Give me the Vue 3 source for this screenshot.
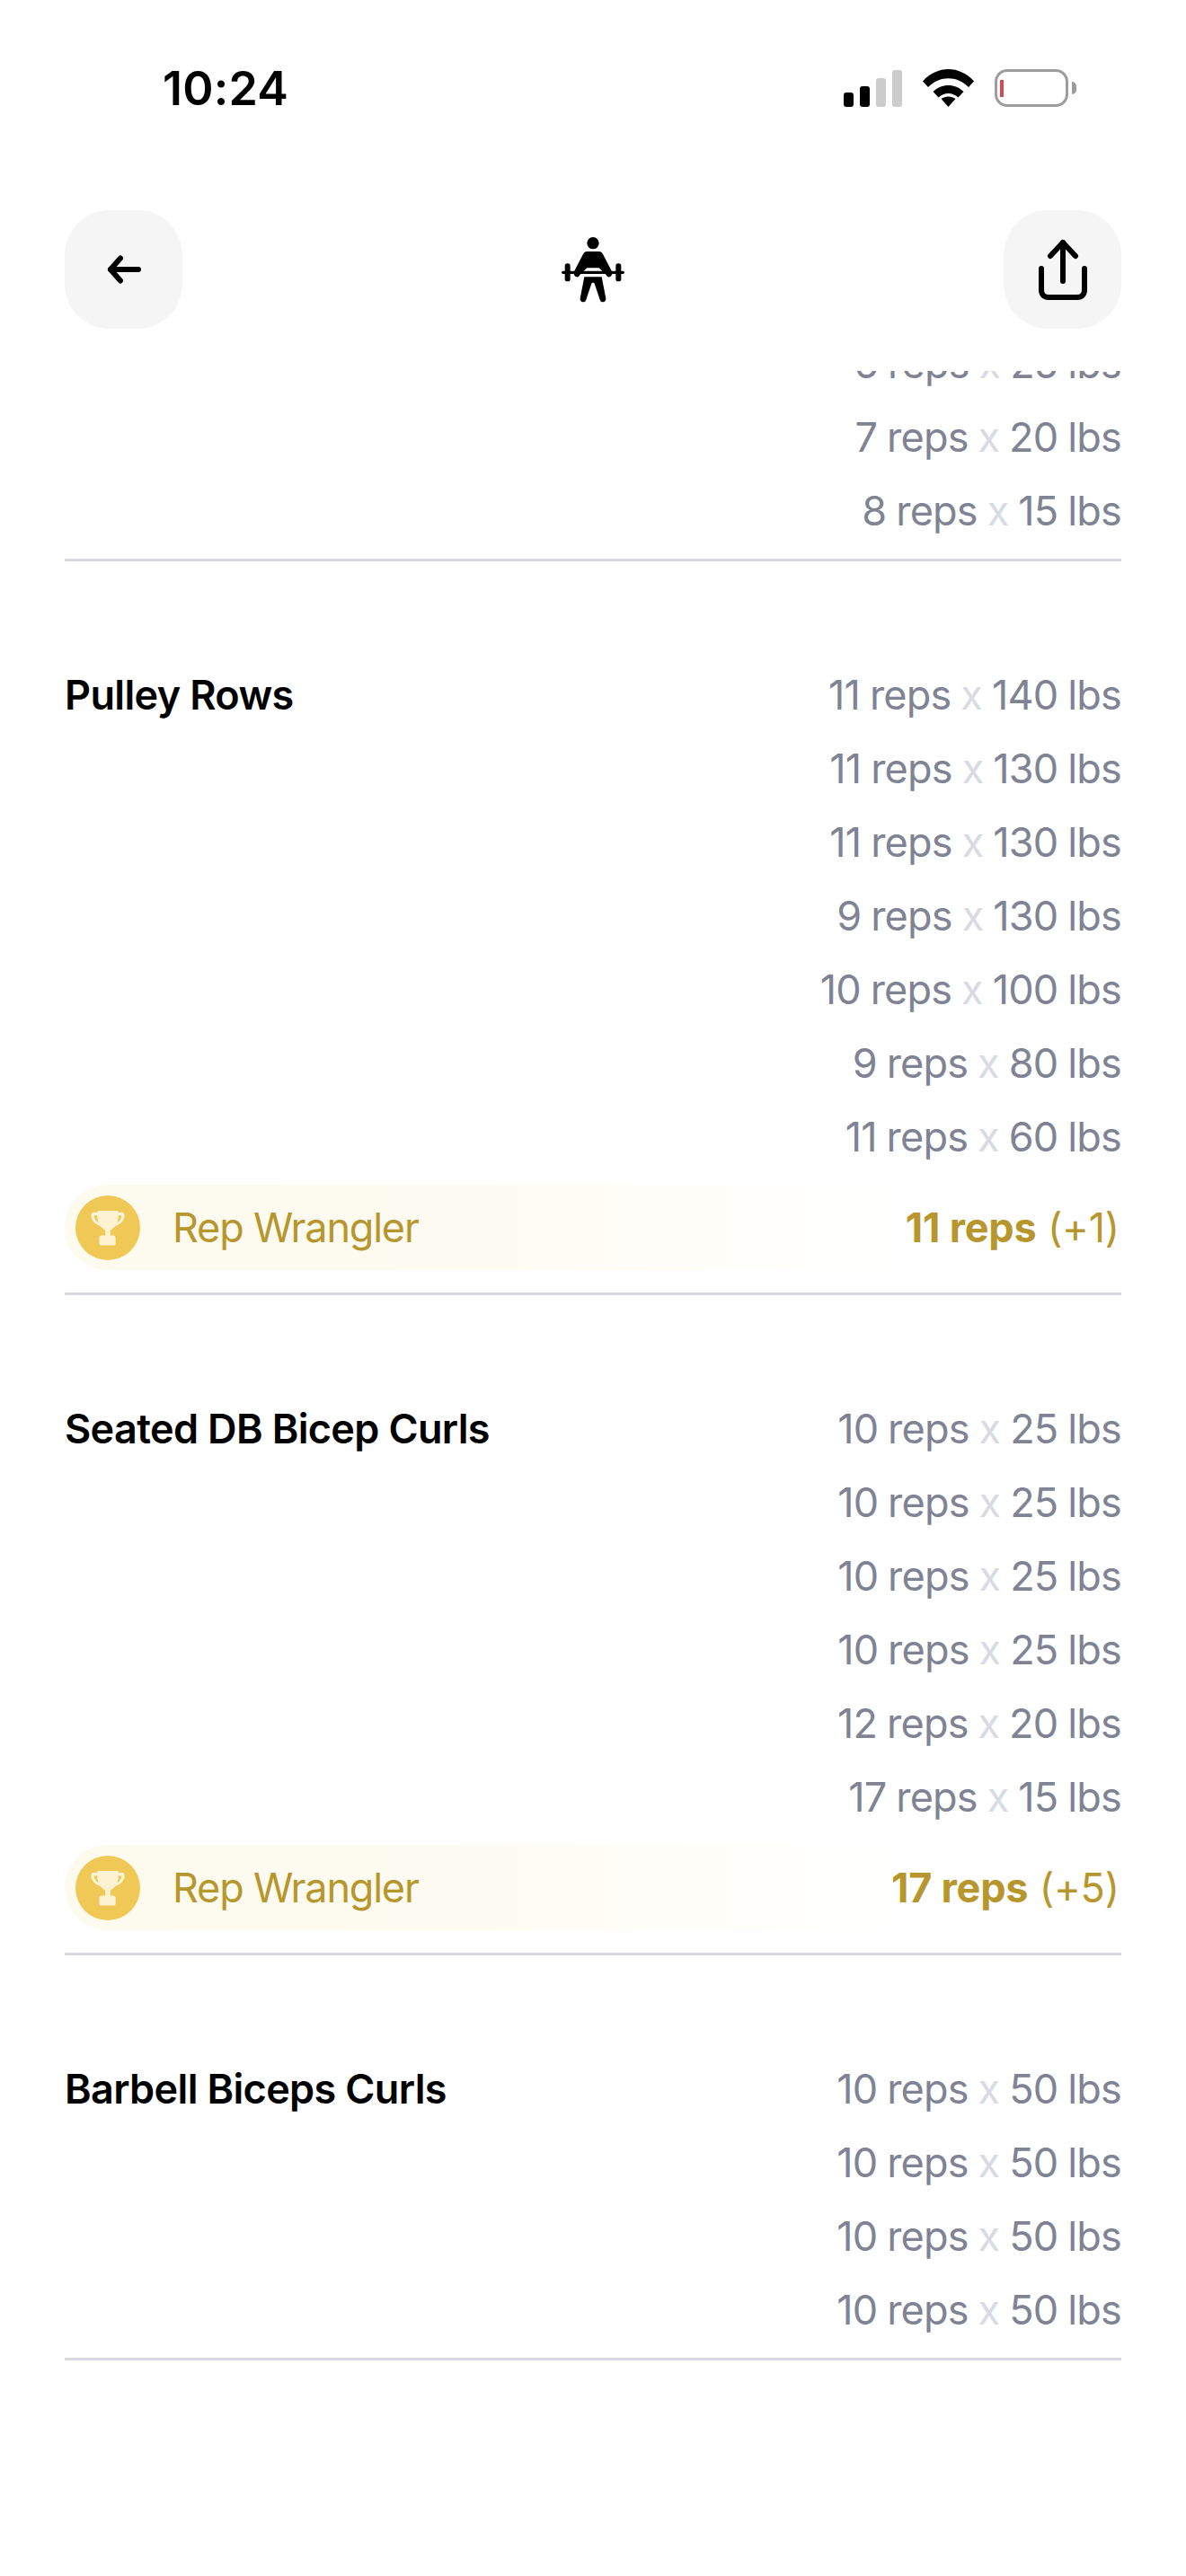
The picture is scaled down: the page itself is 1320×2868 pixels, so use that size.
<script setup>
const groups = [
  {
    sets: [
      { reps: 6, lbs: 25 },
      { reps: 7, lbs: 20 },
      { reps: 8, lbs: 15 },
    ],
  },
  {
    name: 'Pulley Rows',
    sets: [
      { reps: 11, lbs: 140 },
      { reps: 11, lbs: 130 },
      { reps: 11, lbs: 130 },
      { reps: 9, lbs: 130 },
      { reps: 10, lbs: 100 },
      { reps: 9, lbs: 80 },
      { reps: 11, lbs: 60 },
    ],
    award: { title: 'Rep Wrangler', value: '11 reps', delta: '(+1)' },
  },
  {
    name: 'Seated DB Bicep Curls',
    sets: [
      { reps: 10, lbs: 25 },
      { reps: 10, lbs: 25 },
      { reps: 10, lbs: 25 },
      { reps: 10, lbs: 25 },
      { reps: 12, lbs: 20 },
      { reps: 17, lbs: 15 },
    ],
    award: { title: 'Rep Wrangler', value: '17 reps', delta: '(+5)' },
  },
  {
    name: 'Barbell Biceps Curls',
    sets: [
      { reps: 10, lbs: 50 },
      { reps: 10, lbs: 50 },
      { reps: 10, lbs: 50 },
      { reps: 10, lbs: 50 },
    ],
  },
];
</script>

<template>
  <div class="screen">
    <div class="status-bar">
      <span class="time">10:24</span>
      <div class="status-icons">
        <div class="signal">
          <span class="bar on b1"></span>
          <span class="bar on b2"></span>
          <span class="bar b3"></span>
          <span class="bar b4"></span>
        </div>
        <svg class="wifi" width="57" height="42" viewBox="0 0 57 42">
          <path d="M0 13.5C16-4.5 41-4.5 57 13.500L51 20C38 7 19 7 6 20Z" fill="#000" />
          <path d="M11.500 25C21 15.500 36 15.500 45.500 25L39.500 31.500C33 25.500 24 25.500 17.500 31.500Z" fill="#000" />
          <path d="M20.500 33C25 29.500 32 29.500 36.500 33L28.500 42Z" fill="#000" />
        </svg>
        <div class="battery">
          <div class="battery-body"><span class="battery-level"></span></div>
          <span class="battery-tip"></span>
        </div>
      </div>
    </div>

    <div class="top-bar">
      <button class="icon-btn">
        <svg width="38" height="32" viewBox="0 0 38 32" fill="none" stroke="#000" stroke-width="6" stroke-linecap="round" stroke-linejoin="round">
          <path d="M4 16H35" />
          <path d="M15 3.500L4 16L15 28.500" />
        </svg>
      </button>
      <svg class="lifter" width="70" height="74" viewBox="0 0 210 222">
        <circle cx="105" cy="23" r="20" fill="#000" />
        <path d="M84 51H126C131 51 135 54 137 58L168 118C171 126 167 134 160 136C155 137 151 134 149 129L125 106H85L61 129C59 134 55 137 50 136C43 134 39 126 42 118L73 58C75 54 79 51 84 51Z" fill="#000" />
        <rect x="0" y="116" width="210" height="10" rx="5" fill="#000" />
        <rect x="11" y="91" width="18" height="60" rx="8" fill="#000" />
        <rect x="181" y="91" width="18" height="60" rx="8" fill="#000" />
        <path d="M76 136H134L148 208C149 216 144 220 138 220C133 220 129 217 128 212L110 158C109 154 101 154 100 158L82 212C81 217 77 220 72 220C66 220 61 216 62 208Z" fill="#000" />
      </svg>
      <button class="icon-btn">
        <svg width="54" height="68" viewBox="0 0 54 68" fill="none" stroke="#000" stroke-width="6" stroke-linecap="round" stroke-linejoin="round">
          <path d="M27 4V47" />
          <path d="M13 19L27 4L41 19" />
          <path d="M3 33V57C3 62 6 65 11 65H43C48 65 51 62 51 57V33" />
        </svg>
      </button>
    </div>

    <div class="log">
      <div class="log-inner">
        <section v-for="(group, i) in groups" :key="i" class="group">
          <div class="group-main">
            <h3 v-if="group.name" class="group-name">{{ group.name }}</h3>
            <ul class="sets">
              <li v-for="(set, j) in group.sets" :key="j" class="set">
                {{ set.reps }} reps <span class="times">x</span> {{ set.lbs }} lbs
              </li>
            </ul>
          </div>
          <div v-if="group.award" class="award">
            <span class="award-badge">
              <svg width="40" height="40" viewBox="0 0 40 42">
                <path d="M8 1H32V3H36C39 3 40 5 39.500 8C38.500 14 34 17 29 19C27 21 24.500 23 23 24V30H26C28 30 29 31 29 33V39C29 41 28 41.500 26 41.500H13C11 41.500 10 41 10 39V33C10 31 11 30 13 30H17V24C15.500 23 13 21 11 19C6 17 1.500 14 0.500 8C0 5 1 3 4 3H8Z" fill="#fdf3d3" />
                <path d="M4 6.500C4 10 6 13 9 15C8 12 7.500 9 7.500 6.500Z" fill="#f0c855" />
                <path d="M36 6.500C36 10 34 13 31 15C32 12 32.500 9 32.500 6.500Z" fill="#f0c855" />
              </svg>
            </span>
            <span class="award-title">{{ group.award.title }}</span>
            <span class="award-value"><b>{{ group.award.value }}</b> {{ group.award.delta }}</span>
          </div>
        </section>
      </div>
    </div>
  </div>
</template>

<style>
html, body {
  margin: 0;
  background: #fff;
}
</style>

<style scoped>
.screen {
  width: 1320px;
  height: 2868px;
  display: flex;
  flex-direction: column;
  overflow: hidden;
  background: #fff;
  font-family: Inter, "Liberation Sans", sans-serif;
  color: #000;
}

.status-bar {
  height: 196px;
  flex: none;
  box-sizing: border-box;
  display: flex;
  align-items: center;
  justify-content: space-between;
  padding: 0 122px 0 181px;
}

.time {
  font-size: 52px;
  font-weight: 600;
  letter-spacing: 0.2px;
}

.status-icons {
  display: flex;
  align-items: flex-end;
  gap: 23px;
}

.signal {
  display: flex;
  align-items: flex-end;
  gap: 7px;
}

.bar {
  width: 11px;
  border-radius: 3px;
  background: #ccc;
}

.bar.on {
  background: #000;
}

.b1 { height: 16px; }
.b2 { height: 23px; }
.b3 { height: 32px; }
.b4 { height: 41px; }

.battery {
  display: flex;
  align-items: center;
  gap: 4px;
}

.battery-body {
  width: 82px;
  height: 42px;
  box-sizing: border-box;
  border: 3.5px solid #9c9c9c;
  border-radius: 14px;
  display: flex;
  align-items: center;
  padding-left: 3px;
}

.battery-level {
  width: 4px;
  height: 19px;
  background: #d9484f;
}

.battery-tip {
  width: 5px;
  height: 14px;
  background: #9c9c9c;
  border-radius: 0 7px 7px 0;
}

.top-bar {
  flex: none;
  height: 217px;
  box-sizing: border-box;
  padding: 38px 72px 0;
  display: flex;
  align-items: flex-start;
  justify-content: space-between;
}

.icon-btn {
  width: 131px;
  height: 132px;
  border: none;
  padding: 0;
  border-radius: 50px;
  background: #f5f5f5;
  display: flex;
  align-items: center;
  justify-content: center;
}

.lifter {
  margin-top: 29px;
}

.log {
  flex: 1;
  overflow: hidden;
}

.log-inner {
  margin-top: -49px;
  padding: 0 72px;
}

.group {
  border-bottom: 3px solid #d8d8e2;
  padding: 108px 0 12px;
}

.group:first-child {
  padding-top: 0;
}

.group-main {
  display: flex;
  justify-content: space-between;
  align-items: flex-start;
}

.group-name {
  margin: 0;
  font-size: 45px;
  line-height: 82px;
  font-weight: 600;
  letter-spacing: -0.65px;
}

.sets {
  list-style: none;
  margin: 0 0 0 auto;
  padding: 0;
  text-align: right;
}

.set {
  font-size: 45px;
  line-height: 82px;
  color: #7f8394;
  letter-spacing: -0.8px;
  word-spacing: -1px;
}

.times {
  color: #d9dae3;
}

.award {
  height: 95px;
  margin: 12px 0 13px;
  padding: 0 2px 0 12px;
  display: flex;
  align-items: center;
  border-radius: 48px 0 0 48px;
  background: linear-gradient(90deg, #fdfbee 0%, #fefcf2 40%, #ffffff 80%);
  color: #b8962e;
  font-size: 45px;
}

.award-badge {
  width: 72px;
  height: 72px;
  flex: none;
  border-radius: 50%;
  background: #f0c855;
  display: flex;
  align-items: center;
  justify-content: center;
}

.award-title {
  margin-left: 36px;
  letter-spacing: -1.2px;
}

.award-value {
  margin-left: auto;
  letter-spacing: -0.2px;
}

.award-value b {
  font-weight: 700;
}
</style>
